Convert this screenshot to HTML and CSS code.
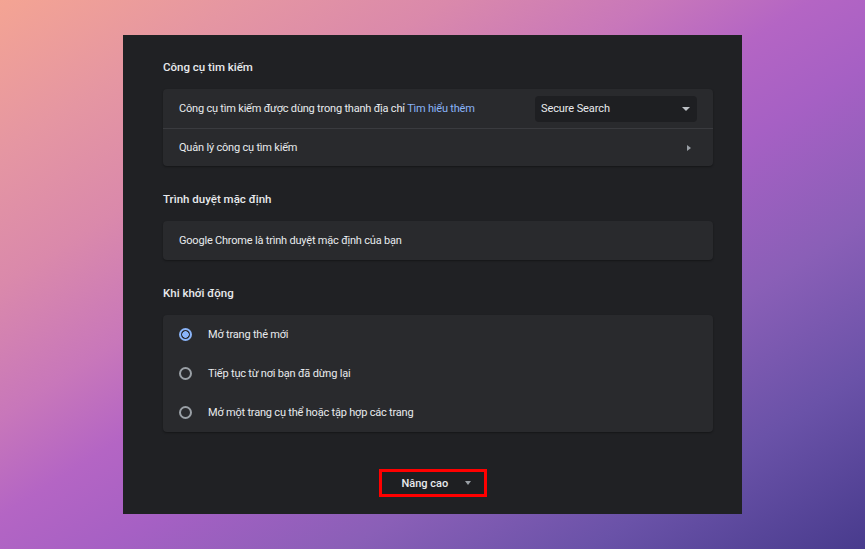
FILE: index.html
```html
<!DOCTYPE html>
<html lang="vi">
<head>
<meta charset="utf-8">
<title>Cài đặt</title>
<link rel="stylesheet" href="styles.css">
</head>
<body>
<main class="panel">
  <section class="section">
    <h2 class="section-title">Công cụ tìm kiếm</h2>
    <div class="card">
      <div class="row">
        <span class="label">Công cụ tìm kiếm được dùng trong thanh địa chỉ <a class="link" href="#">Tìm hiểu thêm</a></span>
        <div class="select">
          <span>Secure Search</span>
          <span class="tri-down"></span>
        </div>
      </div>
      <div class="row row-sep">
        <span class="label">Quản lý công cụ tìm kiếm</span>
        <span class="tri-right"></span>
      </div>
    </div>
  </section>

  <section class="section">
    <h2 class="section-title">Trình duyệt mặc định</h2>
    <div class="card">
      <div class="row">
        <span class="label">Google Chrome là trình duyệt mặc định của bạn</span>
      </div>
    </div>
  </section>

  <section class="section">
    <h2 class="section-title">Khi khởi động</h2>
    <div class="card">
      <div class="row radio-row">
        <span class="radio checked"></span>
        <span class="label">Mở trang thẻ mới</span>
      </div>
      <div class="row radio-row">
        <span class="radio"></span>
        <span class="label">Tiếp tục từ nơi bạn đã dừng lại</span>
      </div>
      <div class="row radio-row">
        <span class="radio"></span>
        <span class="label">Mở một trang cụ thể hoặc tập hợp các trang</span>
      </div>
    </div>
  </section>

  <div class="footer">
    <button class="advanced" type="button">
      <span>Nâng cao</span>
      <span class="tri-down small"></span>
    </button>
  </div>
</main>
</body>
</html>
```

FILE: styles.css
```css
* { box-sizing: border-box; }

html, body {
  margin: 0;
  height: 100%;
}

body {
  display: flex;
  align-items: center;
  justify-content: center;
  font-family: Roboto, "Noto Sans", "Liberation Sans", sans-serif;
  font-size: 11px;
  color: #e8eaed;
  background: linear-gradient(to bottom right,
    #f4a493 0%, #e596a2 14%, #da89ab 26%, #c877ba 38%, #b465c4 47%,
    #a660c4 56%, #8a5fb7 70%, #6a52a8 84%, #483b8d 100%);
}

.panel {
  width: 619px;
  height: 479px;
  background: #202124;
  padding: 22px 0 17px;
  display: flex;
  flex-direction: column;
}

.section {
  margin: 0 29px 0 40px;
}

.section + .section {
  margin-top: 23px;
}

.section-title {
  margin: 0 0 12px;
  font-size: 11.5px;
  font-weight: 500;
  line-height: 20px;
  color: #e8eaed;
}

.card {
  background: #292a2d;
  border-radius: 4px;
  box-shadow: 0 1px 2px rgba(0, 0, 0, 0.35);
}

.row {
  display: flex;
  align-items: center;
  min-height: 39px;
  padding: 0 16px;
}

.row-sep {
  min-height: 38px;
  border-top: 1px solid #3a3b3f;
  padding-right: 22px;
  justify-content: space-between;
}

.label {
  line-height: 16px;
  white-space: nowrap;
  letter-spacing: -0.2px;
}

.link {
  color: #8ab4f8;
  text-decoration: none;
}

.select {
  margin-left: auto;
  width: 162px;
  height: 26px;
  background: #1e1f22;
  border-radius: 4px;
  display: flex;
  align-items: center;
  justify-content: space-between;
  padding: 0 7px 0 6px;
  color: #e8eaed;
  white-space: nowrap;
  letter-spacing: -0.1px;
}

.tri-down {
  width: 0;
  height: 0;
  border-left: 4px solid transparent;
  border-right: 4px solid transparent;
  border-top: 4px solid #bdc1c6;
}

.tri-down.small {
  border-left-width: 3.5px;
  border-right-width: 3.5px;
  border-top: 4px solid #9aa0a6;
}

.tri-right {
  width: 0;
  height: 0;
  border-top: 3.5px solid transparent;
  border-bottom: 3.5px solid transparent;
  border-left: 4px solid #9aa0a6;
}

.radio-row {
  gap: 16px;
}

.radio {
  width: 13px;
  height: 13px;
  border-radius: 50%;
  border: 2px solid #9aa0a6;
  flex: none;
}

.radio.checked {
  border-color: #8ab4f8;
  background: radial-gradient(circle, #8ab4f8 0 3px, transparent 3.5px);
}

.footer {
  margin-top: 37px;
  display: flex;
  justify-content: center;
}

.advanced {
  display: flex;
  align-items: center;
  gap: 17px;
  height: 28px;
  width: 108px;
  padding: 0 12px 0 20px;
  background: #1e1f22;
  border: 3px solid #ff0000;
  border-radius: 0;
  color: #e8eaed;
  font-family: inherit;
  font-size: 11px;
  font-weight: 500;
  white-space: nowrap;
  cursor: pointer;
}
```
